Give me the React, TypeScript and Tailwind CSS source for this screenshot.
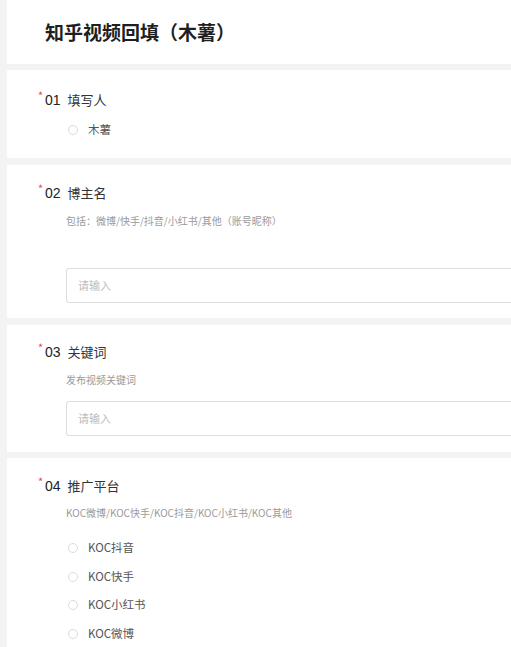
import React from "react";

const font = { fontFamily: '"Noto Sans CJK SC", "Noto Sans", sans-serif' };

function Label({ num, text }: { num: string; text: string }) {
  return (
    <div className="relative flex h-5 items-center pl-[8px] text-[13px] text-[#333]">
      <span className="absolute left-[1px] top-[0px] text-[11px] leading-none text-[#e8475c]">*</span>
      <span className="mr-[7px] text-[14px] font-medium text-[#222]" style={{ fontFamily: '"Liberation Sans", sans-serif' }}>{num}</span>
      <span>{text}</span>
    </div>
  );
}

function Radio({ text }: { text: string }) {
  return (
    <div className="flex h-5 items-center pl-[31px] text-[11.5px] text-[#555]">
      <span className="mr-[10px] h-[10px] w-[10px] rounded-full border border-[#dcdcdc] bg-white" />
      <span>{text}</span>
    </div>
  );
}

function Desc({ text }: { text: string }) {
  return <div className="flex h-5 items-center pl-[29px] text-[10px] text-[#9a9a9a]">{text}</div>;
}

function Field() {
  return (
    <div className="ml-[29px] flex h-[35px] items-center rounded-l-[3px] border border-r-0 border-[#dedede] pl-[11px] text-[11px] text-[#bdbdbd]">
      请输入
    </div>
  );
}

export default function App() {
  return (
    <div className="h-[647px] w-[511px] overflow-hidden bg-[#f3f3f3] pl-[7px]" style={font}>
      <div className="flex h-[64px] items-center bg-white pl-[38px] text-[19px] font-bold text-[#1f1f1f]">
        知乎视频回填（木薯）
      </div>

      <div className="mt-[6px] h-[88px] bg-white pl-[30px] pt-[20px]">
        <Label num="01" text="填写人" />
        <div className="mt-[10px]">
          <Radio text="木薯" />
        </div>
      </div>

      <div className="mt-[7px] h-[153px] bg-white pl-[30px] pt-[18px]">
        <Label num="02" text="博主名" />
        <div className="mt-[7px]">
          <Desc text="包括：微博/快手/抖音/小红书/其他（账号昵称）" />
        </div>
        <div className="mt-[38px]">
          <Field />
        </div>
      </div>

      <div className="mt-[7px] h-[127px] bg-white pl-[30px] pt-[17px]">
        <Label num="03" text="关键词" />
        <div className="mt-[7px]">
          <Desc text="发布视频关键词" />
        </div>
        <div className="mt-[12px]">
          <Field />
        </div>
      </div>

      <div className="mt-[6px] h-[200px] bg-white pl-[30px] pt-[18px]">
        <Label num="04" text="推广平台" />
        <div className="mt-[6px]">
          <Desc text="KOC微博/KOC快手/KOC抖音/KOC小红书/KOC其他" />
        </div>
        <div className="mt-[16px] flex flex-col gap-[8.5px]">
          <Radio text="KOC抖音" />
          <Radio text="KOC快手" />
          <Radio text="KOC小红书" />
          <Radio text="KOC微博" />
        </div>
      </div>
    </div>
  );
}
